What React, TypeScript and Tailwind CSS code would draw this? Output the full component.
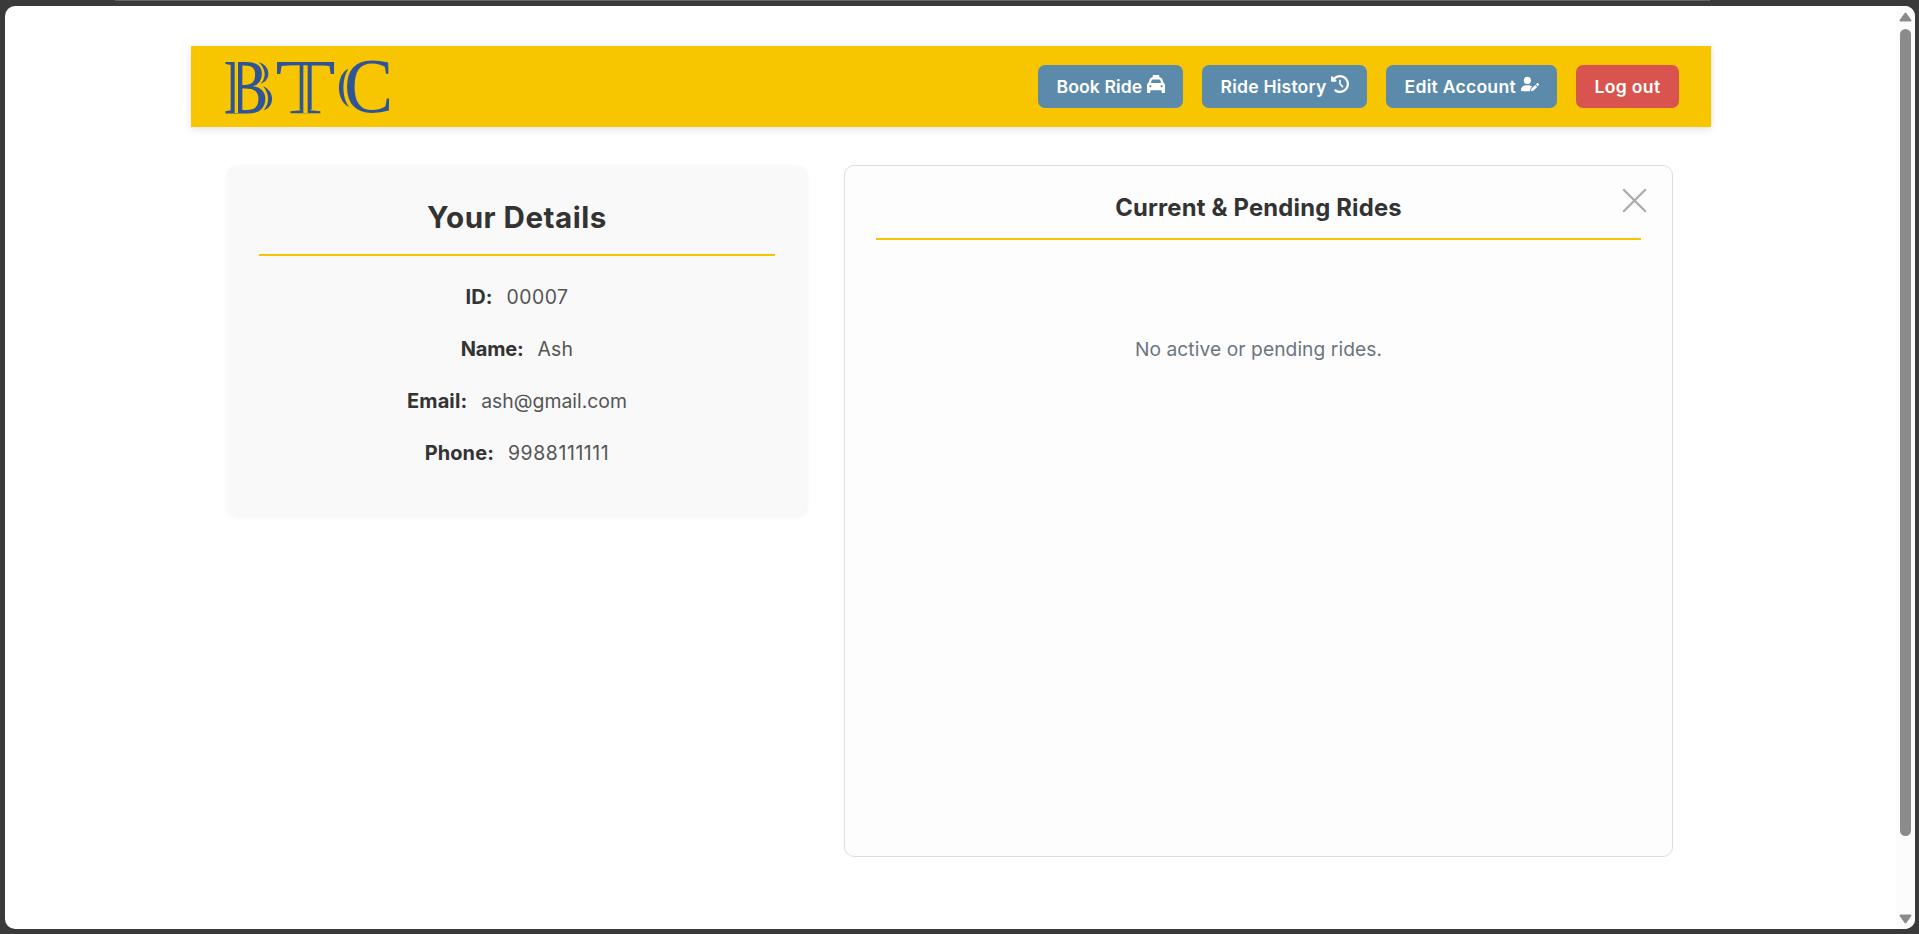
import type { ReactNode } from "react";
import { FaTaxi, FaClockRotateLeft, FaUserPen } from "react-icons/fa6";

function Logo() {
  return (
    <svg viewBox="130 65 510 174" className="block h-[58px] w-[170px] overflow-visible" role="img" aria-label="BTC">
      <g fill="#2f5597" fontFamily="'Liberation Serif', serif" fontSize="233">
        <text transform="translate(131.5 229) scale(0.87 1)">B</text>
        <text transform="translate(287 229) scale(1.274 1)">T</text>
        <text transform="translate(493 228) scale(0.95 1)">C</text>
      </g>
      <rect x="153" y="78" width="35" height="148" fill="#2f5597" />
      <rect x="165" y="74" width="10" height="156" fill="#f7c600" />
      <rect x="360" y="80" width="36" height="140" fill="#2f5597" />
      <rect x="371" y="87" width="13" height="143" fill="#f7c600" />
      <g fill="#2f5597">
        <path d="M237 78C275 88 275 134 243 142C260 126 260 98 237 78Z" />
        <path d="M250 150C286 164 286 212 252 222C270 202 270 172 250 150Z" />
        <path d="M507 97C468 112 468 196 509 212C486 186 486 124 507 97Z" />
      </g>
    </svg>
  );
}

function NavButton({ width, tracking, label, icon, danger }: { width: string; tracking: string; label: string; icon?: ReactNode; danger?: boolean }) {
  return (
    <button className={`flex h-[43px] items-center rounded-[7px] pl-[18.5px] text-[17.6px] font-semibold whitespace-nowrap text-white ${width} ${danger ? "bg-[#d9534f]" : "bg-[#5b8aab]"}`}>
      <span className={`mt-px ${tracking}`}>{label}</span>
      {icon && <span className="mb-[5px] ml-auto pr-[18.5px]">{icon}</span>}
    </button>
  );
}

const details = [
  { label: "ID:", value: "00007", labelTracking: "tracking-[0.1px]", valueTracking: "tracking-[0.5px]" },
  { label: "Name:", value: "Ash", labelTracking: "tracking-[-0.2px]", valueTracking: "tracking-[0.2px]" },
  { label: "Email:", value: "ash@gmail.com", labelTracking: "tracking-[0.1px]", valueTracking: "tracking-[0px]" },
  { label: "Phone:", value: "9988111111", labelTracking: "tracking-[0.1px]", valueTracking: "tracking-[0.6px]" },
];

function Scrollbar() {
  return (
    <div className="flex w-[19px] shrink-0 flex-col items-center bg-[#fcfcfc] pt-[6px] pr-px pb-[5px]">
      <svg width="13" height="10" viewBox="0 0 13 10">
        <path d="M6.5 1.5L11.5 8.5H1.5Z" fill="#8b8b8b" stroke="#8b8b8b" strokeWidth="2" strokeLinejoin="round" />
      </svg>
      <div className="mt-[7px] h-[807px] w-[11px] rounded-full bg-[#8b8b8b]" />
      <svg width="13" height="10" viewBox="0 0 13 10" className="mt-auto">
        <path d="M6.5 8.5L11.5 1.5H1.5Z" fill="#8b8b8b" stroke="#8b8b8b" strokeWidth="2" strokeLinejoin="round" />
      </svg>
    </div>
  );
}

export default function App() {
  return (
    <div className="flex h-[934px] w-full flex-col bg-[#3b3a3a] pr-[4px] pb-[5px] pl-[5px] font-['Inter',sans-serif]">
      <div className="ml-[110px] h-px w-[1595px] shrink-0 bg-[#666666]" />
      <div className="mt-[5px] flex min-h-0 flex-1 overflow-hidden rounded-[10px] bg-white">
        <div className="flex flex-1 flex-col pt-[40px] pl-[186px]">
          <header className="flex h-[81px] w-[1520px] items-center bg-[#f7c600] pr-[32px] pl-[32px] shadow-[0_2px_8px_rgba(0,0,0,0.12)]">
            <Logo />
            <nav className="ml-auto flex gap-[19px]">
              <NavButton width="w-[145px]" tracking="tracking-[0.1px]" label="Book Ride" icon={<FaTaxi size={18} />} />
              <NavButton width="w-[165px]" tracking="tracking-[0.2px]" label="Ride History" icon={<FaClockRotateLeft size={18} />} />
              <NavButton width="w-[171px]" tracking="tracking-[0.25px]" label="Edit Account" icon={<FaUserPen size={18} />} />
              <NavButton width="w-[103px]" tracking="tracking-[0.3px]" label="Log out" danger />
            </nav>
          </header>
          <main className="mt-[38px] ml-[36px] flex items-start gap-[37px]">
            <section className="h-[350px] w-[580px] rounded-[10px] bg-[#f9f9f9] px-[32px] pt-[32px] text-center shadow-[0_2px_5px_rgba(0,0,0,0.05)]">
              <h2 className="h-[59px] border-b-2 border-[#f7c600] text-[29.6px] leading-[41px] font-bold tracking-[0.5px] text-[#333]">Your Details</h2>
              <dl className="pt-[27px]">
                {details.map((d) => (
                  <div key={d.label} className="flex h-[52px] items-baseline justify-center gap-[14px] leading-[28px]">
                    <dt className={`text-[20px] font-bold text-[#333] ${d.labelTracking}`}>{d.label}</dt>
                    <dd className={`text-[19.4px] text-[#555] ${d.valueTracking}`}>{d.value}</dd>
                  </div>
                ))}
              </dl>
            </section>
            <section className="relative h-[692px] w-[829px] rounded-[10px] border border-[#dddddd] bg-[#fdfdfd] px-[31px] pt-[24px] text-center">
              <button aria-label="Close" className="absolute top-[22px] right-[25px]">
                <svg width="25" height="25" viewBox="0 0 25 25" fill="none" stroke="#aaaaaa" strokeWidth="2.2">
                  <path d="M1.2 1.2L23.8 23.8M23.8 1.2L1.2 23.8" />
                </svg>
              </button>
              <h3 className="h-[50px] border-b-2 border-[#f7c600] text-[23.8px] leading-[36px] font-bold tracking-[0.2px] text-[#333]">Current &amp; Pending Rides</h3>
              <p className="mt-[95px] text-[19.2px] leading-[28px] tracking-[0.08px] text-[#6c757d]">No active or pending rides.</p>
            </section>
          </main>
        </div>
        <Scrollbar />
      </div>
    </div>
  );
}
